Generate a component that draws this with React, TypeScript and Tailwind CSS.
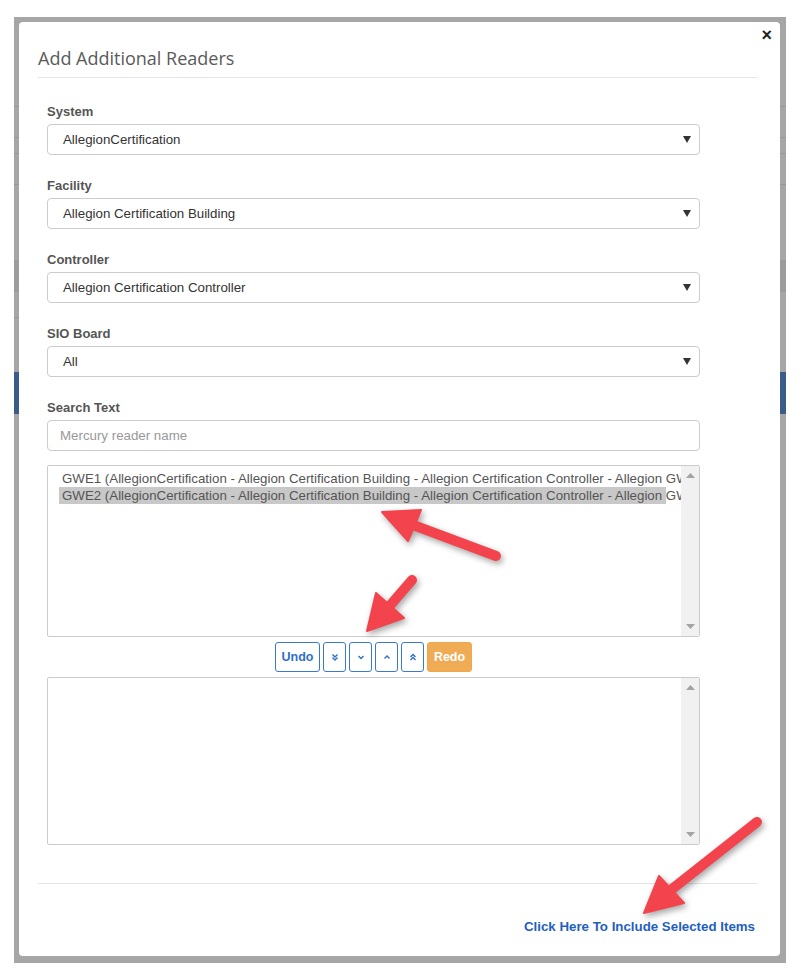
import React from "react";

const font = { fontFamily: '"Liberation Sans", Arial, sans-serif' };

function SelectBox({ value }: { value: string }) {
  return (
    <div className="flex h-[31px] w-[653px] items-center justify-between rounded-[4px] border border-[#cccccc] bg-white pl-[15px] pr-[8px] text-[13.3px] text-[#333333]">
      <span>{value}</span>
      <svg width="8" height="7" viewBox="0 0 8 7">
        <path d="M0 0 L8 0 L4 7 Z" fill="#333" />
      </svg>
    </div>
  );
}

function Field({ label, children }: { label: string; children: React.ReactNode }) {
  return (
    <div className="flex flex-col">
      <div className="mb-[4px] h-[16px] text-[13px] font-bold leading-[16px] text-[#555555]">{label}</div>
      {children}
    </div>
  );
}

function ScrollBar() {
  return (
    <div className="flex w-[18px] flex-col items-center justify-between bg-[#f1f1f1] py-[7px]">
      <svg width="9" height="5" viewBox="0 0 9 5">
        <path d="M0 5 L4.5 0 L9 5 Z" fill="#a3a3a3" />
      </svg>
      <svg width="9" height="5" viewBox="0 0 9 5">
        <path d="M0 0 L9 0 L4.5 5 Z" fill="#a3a3a3" />
      </svg>
    </div>
  );
}

function Chevron({ kind }: { kind: "dd" | "d" | "u" | "uu" }) {
  const paths: Record<string, string[]> = {
    dd: ["M1.5 1.5 L4 4 L6.5 1.5", "M1.5 4.5 L4 7 L6.5 4.5"],
    d: ["M1.5 3 L4 5.5 L6.5 3"],
    u: ["M1.5 5.5 L4 3 L6.5 5.5"],
    uu: ["M1.5 4 L4 1.5 L6.5 4", "M1.5 7 L4 4.5 L6.5 7"],
  };
  return (
    <svg width="8" height="9" viewBox="0 0 8 9">
      {paths[kind].map((p, i) => (
        <path key={i} d={p} fill="none" stroke="#2f6fc6" strokeWidth="1.4" />
      ))}
    </svg>
  );
}

function Arrow({ tail, tip, w1, w2 }: { tail: [number, number]; tip: [number, number]; w1: [number, number]; w2: [number, number] }) {
  const bx = (w1[0] + w2[0]) / 2;
  const by = (w1[1] + w2[1]) / 2;
  return (
    <g>
      <line x1={tail[0]} y1={tail[1]} x2={bx} y2={by} stroke="#f3434c" strokeWidth="10" strokeLinecap="round" />
      <polygon points={`${tip[0]},${tip[1]} ${w1[0]},${w1[1]} ${w2[0]},${w2[1]}`} fill="#f3434c" stroke="#f3434c" strokeWidth="2" strokeLinejoin="round" />
    </g>
  );
}

const rowText =
  "(AllegionCertification - Allegion Certification Building - Allegion Certification Controller - Allegion GWE SIO Board)";

export default function App() {
  return (
    <div className="relative h-[978px] w-[807px] overflow-hidden bg-white" style={font}>
      <div className="pl-[14px] pt-[17px]">
        <div className="relative h-[946px] w-[772px] bg-[#a6a6a6] pl-[5px] pt-[5px]">
          {/* underlying page hints */}
          <div className="absolute left-0 top-[89px] h-[1px] w-[5px] bg-[#979797]" />
          <div className="absolute left-0 top-[120px] h-[1px] w-[5px] bg-[#979797]" />
          <div className="absolute left-0 top-[136px] h-[1px] w-[5px] bg-[#979797]" />
          <div className="absolute left-0 top-[167px] h-[1px] w-[5px] bg-[#979797]" />
          <div className="absolute left-0 top-[243px] h-[32px] w-[5px] bg-[#9c9c9c]" />
          <div className="absolute left-0 top-[300px] h-[1px] w-[5px] bg-[#979797]" />
          <div className="absolute left-0 top-[355px] h-[42px] w-[5px] bg-[#3b5b8a]" />
          <div className="absolute right-0 top-[89px] h-[1px] w-[6px] bg-[#979797]" />
          <div className="absolute right-0 top-[120px] h-[1px] w-[6px] bg-[#979797]" />
          <div className="absolute right-0 top-[136px] h-[1px] w-[6px] bg-[#979797]" />
          <div className="absolute right-0 top-[167px] h-[1px] w-[6px] bg-[#979797]" />
          <div className="absolute right-0 top-[243px] h-[32px] w-[6px] bg-[#9c9c9c]" />
          <div className="absolute right-0 top-[355px] h-[42px] w-[6px] bg-[#3b5b8a]" />

          {/* modal */}
          <div className="relative flex h-[934px] w-[761px] flex-col rounded-[4px] bg-white">
            <button className="absolute right-[8px] top-[6px] text-[18px] font-bold leading-[14px] text-[#222]">×</button>
            <div className="ml-[19px] mr-[23px] border-b border-[#e5e5e5] pb-[6px] pt-[23px]">
              <div
                className="text-[18px] leading-[26px] text-[#5a5a5a]"
                style={{ fontFamily: '"Open Sans", "Liberation Sans", sans-serif' }}
              >
                Add Additional Readers
              </div>
            </div>

            <div className="flex flex-col px-[28px] pt-[26px]">
              <div className="flex flex-col gap-[23px]">
                <Field label="System">
                  <SelectBox value="AllegionCertification" />
                </Field>
                <Field label="Facility">
                  <SelectBox value="Allegion Certification Building" />
                </Field>
                <Field label="Controller">
                  <SelectBox value="Allegion Certification Controller" />
                </Field>
                <Field label="SIO Board">
                  <SelectBox value="All" />
                </Field>
                <Field label="Search Text">
                  <div className="flex h-[31px] w-[653px] items-center rounded-[4px] border border-[#cccccc] bg-white pl-[12px] text-[13.3px] text-[#999999]">
                    Mercury reader name
                  </div>
                </Field>
              </div>

              {/* list 1 */}
              <div className="mt-[14px] flex h-[172px] w-[653px] rounded-[2px] border border-[#cccccc]">
                <div className="flex-1 overflow-hidden pl-[11px] pt-[4px] text-[13.3px] leading-[17px] text-[#555555]">
                  <div className="w-[607px] whitespace-nowrap pl-[3px]">GWE1 {rowText}</div>
                  <div className="w-[607px] whitespace-nowrap bg-[#c8c8c8] pl-[3px]">GWE2 {rowText}</div>
                </div>
                <ScrollBar />
              </div>

              {/* buttons */}
              <div className="mt-[5px] flex w-[653px] justify-center gap-[3px]">
                <button className="flex h-[30px] w-[45px] items-center justify-center rounded-[3px] border border-[#3a78d6] bg-white text-[12.5px] font-bold text-[#2f6fc6]">
                  Undo
                </button>
                <button className="flex h-[30px] w-[23px] items-center justify-center rounded-[3px] border border-[#3a78d6] bg-white">
                  <Chevron kind="dd" />
                </button>
                <button className="flex h-[30px] w-[23px] items-center justify-center rounded-[3px] border border-[#3a78d6] bg-white">
                  <Chevron kind="d" />
                </button>
                <button className="flex h-[30px] w-[23px] items-center justify-center rounded-[3px] border border-[#3a78d6] bg-white">
                  <Chevron kind="u" />
                </button>
                <button className="flex h-[30px] w-[23px] items-center justify-center rounded-[3px] border border-[#3a78d6] bg-white">
                  <Chevron kind="uu" />
                </button>
                <button className="flex h-[30px] w-[45px] items-center justify-center rounded-[3px] border border-[#eea94f] bg-[#efac55] text-[12.5px] font-bold text-white">
                  Redo
                </button>
              </div>

              {/* list 2 */}
              <div className="mt-[5px] flex h-[168px] w-[653px] rounded-[2px] border border-[#cccccc]">
                <div className="flex-1" />
                <ScrollBar />
              </div>
            </div>

            <div className="ml-[19px] mr-[23px] mt-[38px] border-t border-[#e5e5e5]" />
            <div className="flex justify-end pr-[25px] pt-[35px]">
              <a className="text-[13.3px] font-bold leading-[15px] text-[#1f5fc0]">Click Here To Include Selected Items</a>
            </div>
          </div>
        </div>
      </div>

      {/* annotation arrows */}
      <svg
        className="pointer-events-none absolute left-0 top-0"
        width="807"
        height="978"
        style={{ filter: "drop-shadow(2px 3px 3px rgba(0,0,0,0.35))" }}
      >
        <Arrow tail={[496, 556]} tip={[382, 512]} w1={[421, 510]} w2={[408, 541]} />
        <Arrow tail={[412, 580]} tip={[367, 631]} w1={[376, 593]} w2={[404, 618]} />
        <Arrow tail={[757, 822]} tip={[644, 913]} w1={[659, 876]} w2={[684, 903]} />
      </svg>
    </div>
  );
}
